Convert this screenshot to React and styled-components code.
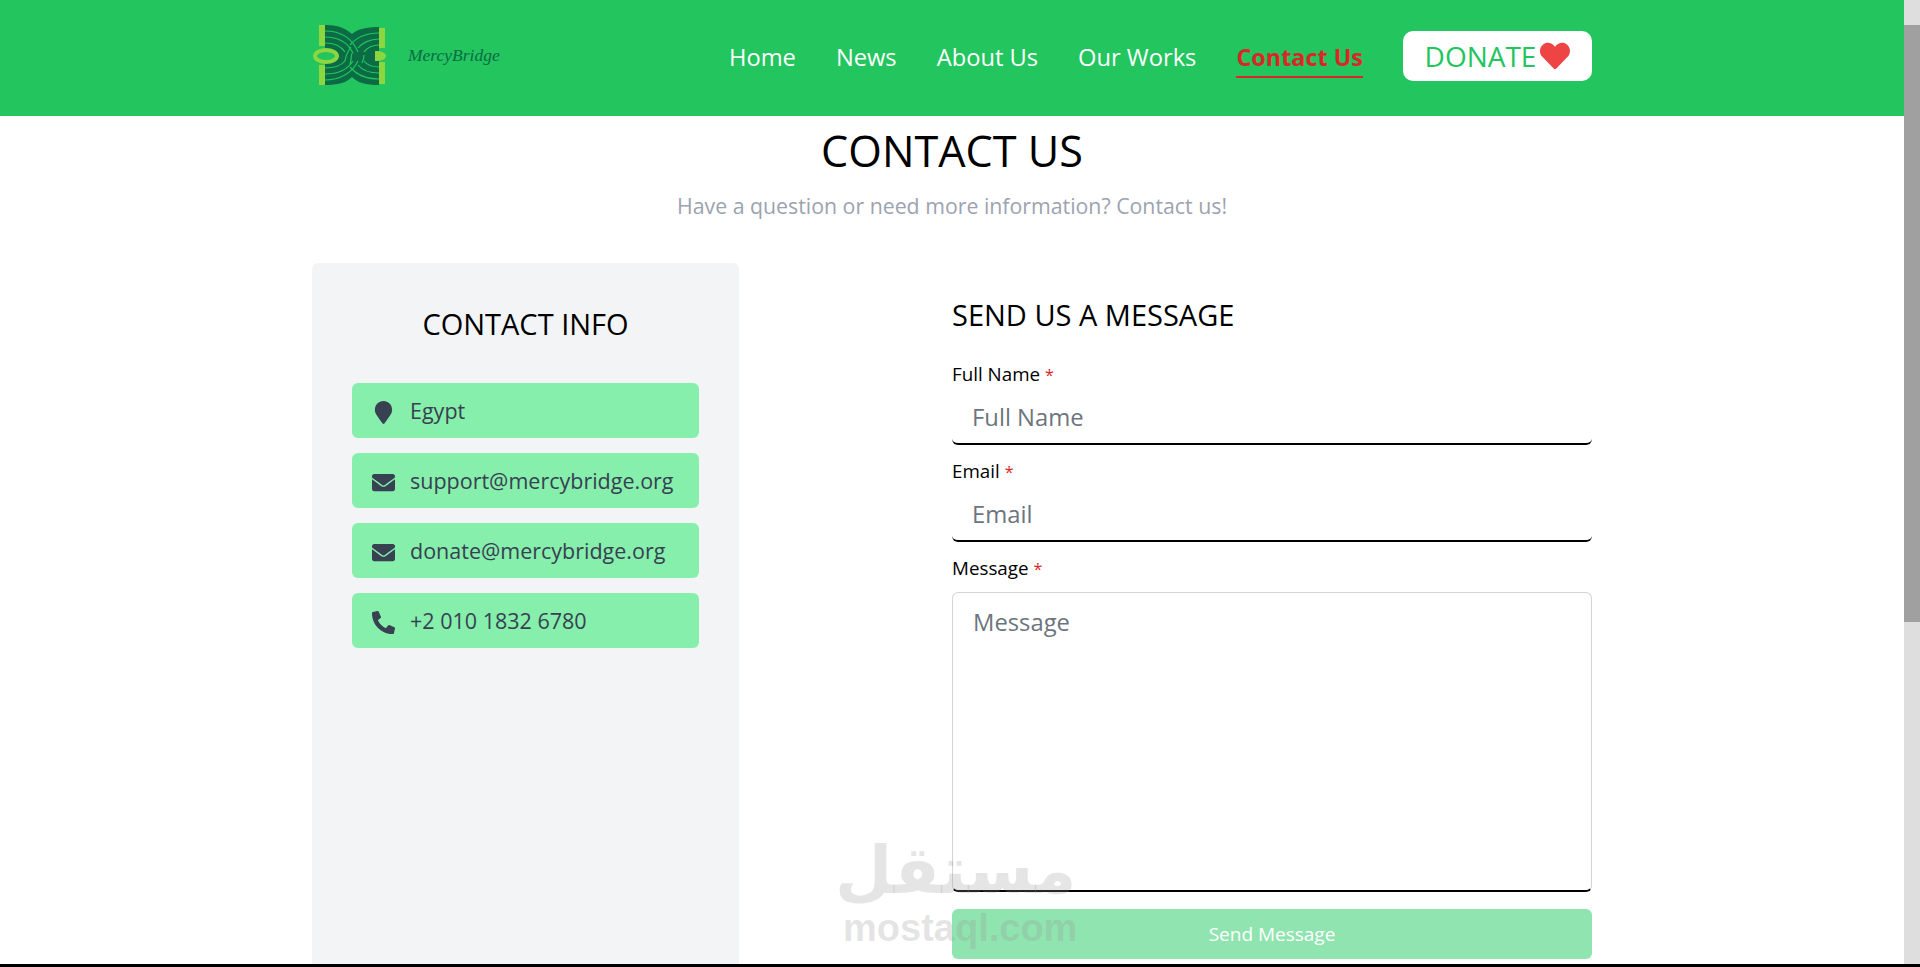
import React from "react";
import styled, { createGlobalStyle } from "styled-components";
import { FaEnvelope, FaHeart, FaMapMarker, FaPhoneAlt } from "react-icons/fa";

const GlobalStyle = createGlobalStyle`
  * { box-sizing: border-box; }
  html, body { margin: 0; height: 100%; overflow: hidden; background: #fff; }
  body { font-family: "Open Sans", "Noto Sans", "Liberation Sans", sans-serif; color: #000; }
  input::placeholder, textarea::placeholder { color: #6c757d; opacity: 1; }
`;

const Frame = styled.div`
  position: relative;
  height: 967px;
  display: flex;
  overflow: hidden;
  border-bottom: 3px solid #000;
`;
const Page = styled.div`
  flex: 1;
  min-width: 0;
`;
const Scrollbar = styled.div`
  width: 16px;
  background: #dedede;
  padding-top: 25px;
`;
const Thumb = styled.div`
  height: 597px;
  background: #a0a0a0;
`;
const Header = styled.header`
  height: 116px;
  background: #22c55e;
`;
const Wrap = styled.div`
  width: 1280px;
  margin: 0 auto;
`;
const HeaderRow = styled(Wrap)`
  height: 100%;
  display: flex;
  align-items: center;
  justify-content: space-between;
`;
const Brand = styled.a`
  display: flex;
  align-items: center;
  gap: 20px;
  margin-top: -5px;
`;
const BrandName = styled.span`
  font-family: "Liberation Serif", serif;
  font-style: italic;
  font-size: 17.5px;
  color: #0b6b45;
`;
const Nav = styled.nav`
  display: flex;
  align-items: center;
  gap: 40px;
  margin-bottom: 4px;
`;
const NavLink = styled.a`
  font-size: ${(p) => (p.$active ? "23.4px" : "23.7px")};
  line-height: 30px;
  padding-bottom: 4px;
  margin-top: 8px;
  color: ${(p) => (p.$active ? "#dc2626" : "#fff")};
  font-weight: ${(p) => (p.$active ? 700 : 400)};
  border-bottom: 2px solid ${(p) => (p.$active ? "#dc2626" : "transparent")};
`;
const Donate = styled.a`
  width: 189px;
  height: 50px;
  display: flex;
  align-items: center;
  justify-content: center;
  gap: 4px;
  background: #fff;
  border-radius: 10px;
  color: #22c55e;
  font-size: 28px;
  svg { color: #ef4444; }
`;
const Title = styled.h1`
  margin: 6px 0 0;
  text-align: center;
  font-size: 43.2px;
  line-height: 58px;
  font-weight: 400;
`;
const Subtitle = styled.p`
  margin: 11px 0 0;
  text-align: center;
  font-size: 21.3px;
  line-height: 30px;
  color: #9ca3af;
`;
const Columns = styled(Wrap)`
  margin-top: 42px;
  display: flex;
  justify-content: space-between;
  align-items: flex-start;
`;
const InfoCard = styled.aside`
  width: 427px;
  height: 720px;
  padding: 41px 40px 40px;
  background: #f3f4f6;
  border-radius: 6px;
`;
const InfoTitle = styled.h2`
  margin: 0 0 39px;
  text-align: center;
  font-size: 29px;
  line-height: 40px;
  font-weight: 400;
`;
const InfoList = styled.div`
  display: flex;
  flex-direction: column;
  gap: 15px;
`;
const InfoItem = styled.div`
  height: 55px;
  display: flex;
  align-items: center;
  gap: 15px;
  padding: 0 20px;
  background: #86efac;
  border-radius: 6px;
  color: #374151;
  font-size: 21.5px;
`;
const IconBox = styled.span`
  width: 23px;
  padding-top: 3px;
  display: flex;
  justify-content: center;
  color: #374151;
`;
const Form = styled.form`
  width: 640px;
  padding-top: 33px;
`;
const FormTitle = styled.h2`
  margin: 0 0 26px;
  font-size: 29px;
  line-height: 38px;
  font-weight: 400;
`;
const Label = styled.label`
  display: block;
  font-size: 18.8px;
  line-height: 29px;
`;
const Required = styled.span`
  color: #dc2626;
  font-size: 16px;
  line-height: 1;
  margin-left: 5px;
`;
const Field = styled.div`
  margin-bottom: 12px;
`;
const Input = styled.input`
  display: block;
  width: 100%;
  height: 56px;
  padding: 2px 20px 0;
  border: 0;
  border-bottom: 2px solid #000;
  border-radius: 6px;
  outline: 0;
  font: inherit;
  font-size: 23.8px;
`;
const TextArea = styled.textarea`
  display: block;
  width: 100%;
  height: 300px;
  margin-top: 9px;
  padding: 13px 20px;
  border: 1px solid #d1d5db;
  border-bottom: 2px solid #000;
  border-radius: 6px;
  outline: 0;
  resize: none;
  font: inherit;
  font-size: 23.8px;
`;
const SendButton = styled.button`
  display: block;
  width: 100%;
  height: 50px;
  margin-top: 17px;
  border: 0;
  border-radius: 6px;
  background: #90e4b0;
  color: #fff;
  font: inherit;
  font-size: 19px;
`;
// site watermark laid over the page
const Watermark = styled.div`
  position: absolute;
  left: 843px;
  top: 833px;
  width: 232px;
  text-align: center;
  white-space: nowrap;
  color: rgba(150, 150, 150, 0.25);
  pointer-events: none;
`;
const WatermarkArabic = styled.div`
  font-family: "DejaVu Sans", sans-serif;
  font-weight: 700;
  font-size: 66px;
  line-height: 76px;
  margin-left: -8px;
`;
const WatermarkLatin = styled.div`
  font-family: "Liberation Sans", sans-serif;
  font-weight: 700;
  font-size: 38px;
  line-height: 38px;
`;

const Logo = () => (
  <svg width="76" height="62" viewBox="0 0 76 62" aria-hidden="true">
    <path d="M13 0 C28 0 34 4 40 9 C46 4 54 2 67 2 L67 60 C54 60 46 58 40 52 C34 58 26 60 13 60 Z" fill="#0b6b45" />
    <g fill="none" stroke="#22c55e" strokeWidth="1.2">
      <path d="M13 6 C28 6 40 13 46 27" />
      <path d="M13 12 C26 12 36 18 41 28" />
      <path d="M13 18 C22 18 29 21 33 27" />
      <path d="M67 8 C54 8 44 13 38 20" />
      <path d="M67 14 C58 14 50 18 46 23" />
      <path d="M67 20 C60 20 55 23 52 27" />
      <path d="M13 55 C28 55 40 48 46 36" />
      <path d="M13 49 C26 49 36 44 41 36" />
      <path d="M13 43 C22 43 29 41 33 36" />
      <path d="M67 54 C54 54 44 49 38 42" />
      <path d="M67 48 C58 48 50 45 46 40" />
      <path d="M67 42 C60 42 55 40 52 36" />
      <path d="M33 36 C34 30 36 26 39 22" />
      <path d="M40 28 C39 33 39 36 38 40" />
      <path d="M52 30 C52 33 51 36 50 38" />
    </g>
    <rect x="7" y="0" width="6" height="21" fill="#8cd63f" />
    <rect x="7" y="40" width="6" height="20" fill="#8cd63f" />
    <rect x="67" y="3" width="6" height="20" fill="#8cd63f" />
    <rect x="67" y="37" width="6" height="22" fill="#8cd63f" />
    <ellipse cx="14" cy="31" rx="11" ry="6" fill="#22c55e" stroke="#8cd63f" strokeWidth="4" />
    <path d="M63 26 C70 26 74 28 74 31 C74 34 70 36 63 36 Z" fill="#8cd63f" />
  </svg>
);

const links = ["Home", "News", "About Us", "Our Works"];
const contacts = [
  { icon: <FaMapMarker size={23} />, text: "Egypt" },
  { icon: <FaEnvelope size={23} />, text: "support@mercybridge.org" },
  { icon: <FaEnvelope size={23} />, text: "donate@mercybridge.org" },
  { icon: <FaPhoneAlt size={23} />, text: "+2 010 1832 6780" },
];

export default function App() {
  return (
    <>
      <GlobalStyle />
      <Frame>
        <Page>
          <Header>
            <HeaderRow>
              <Brand>
                <Logo />
                <BrandName>MercyBridge</BrandName>
              </Brand>
              <Nav>
                {links.map((l) => (
                  <NavLink key={l}>{l}</NavLink>
                ))}
                <NavLink $active>Contact Us</NavLink>
                <Donate>
                  DONATE
                  <FaHeart size={30} />
                </Donate>
              </Nav>
            </HeaderRow>
          </Header>
          <Title>CONTACT US</Title>
          <Subtitle>Have a question or need more information? Contact us!</Subtitle>
          <Columns>
            <InfoCard>
              <InfoTitle>CONTACT INFO</InfoTitle>
              <InfoList>
                {contacts.map((c) => (
                  <InfoItem key={c.text}>
                    <IconBox>{c.icon}</IconBox>
                    {c.text}
                  </InfoItem>
                ))}
              </InfoList>
            </InfoCard>
            <Form>
              <FormTitle>SEND US A MESSAGE</FormTitle>
              <Field>
                <Label>Full Name<Required>*</Required></Label>
                <Input placeholder="Full Name" />
              </Field>
              <Field>
                <Label>Email<Required>*</Required></Label>
                <Input placeholder="Email" />
              </Field>
              <Label>Message<Required>*</Required></Label>
              <TextArea placeholder="Message" />
              <SendButton type="button">Send Message</SendButton>
            </Form>
          </Columns>
        </Page>
        <Scrollbar>
          <Thumb />
        </Scrollbar>
        <Watermark>
          <WatermarkArabic>مستقل</WatermarkArabic>
          <WatermarkLatin>mostaql.com</WatermarkLatin>
        </Watermark>
      </Frame>
    </>
  );
}
